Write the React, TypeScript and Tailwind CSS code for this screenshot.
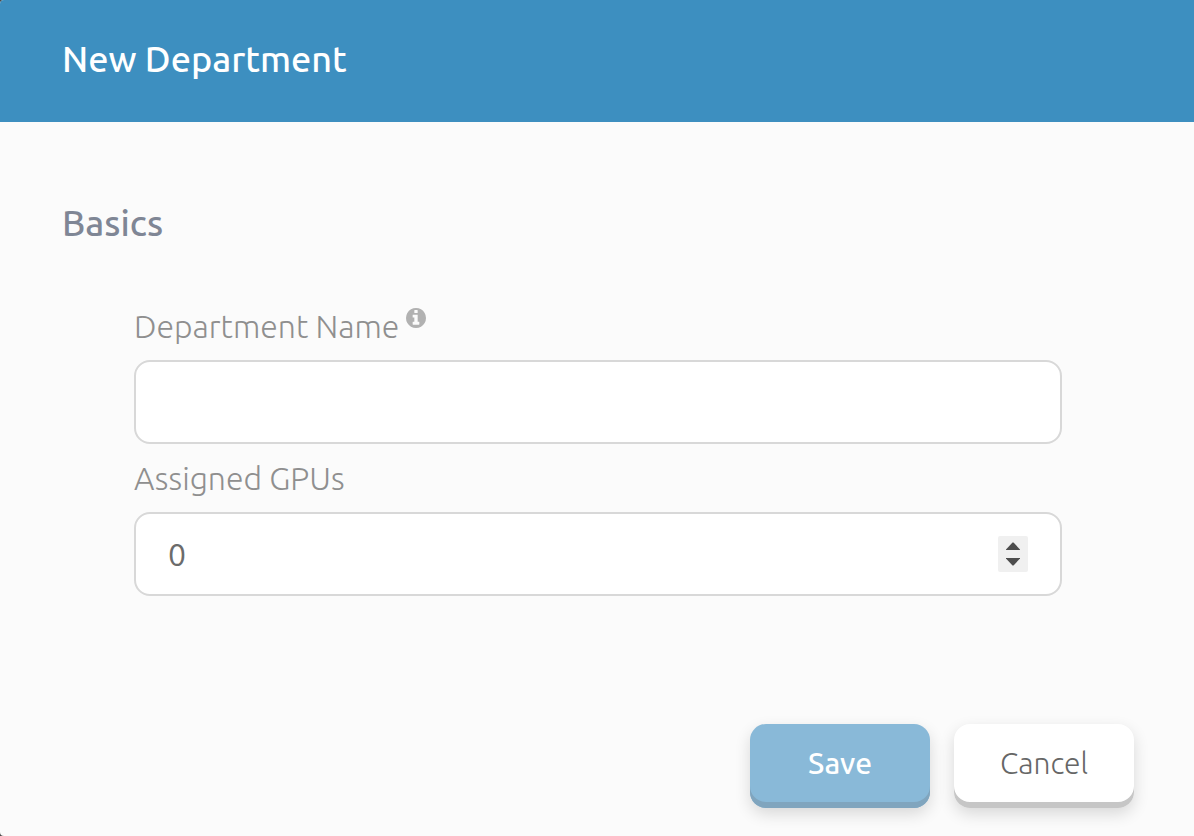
import { useState } from "react";

const fieldClass =
  "block h-21 w-full rounded-2xl border-2 border-[#d8d8d8] bg-white px-8 text-[32px] leading-10 text-[#6b6b6b] outline-none focus:border-[#3d8fc0]";
const labelClass = "text-[32px] leading-10 font-light text-[#8f8f8f]";

function InfoIcon() {
  return (
    <svg className="mt-0.5 size-5" viewBox="128 128 1536 1536" fill="#b1b1b1" aria-hidden="true">
      <path d="M1152 1376v-160q0-14-9-23t-23-9h-96v-512q0-14-9-23t-23-9h-320q-14 0-23 9t-9 23v160q0 14 9 23t23 9h96v320h-96q-14 0-23 9t-9 23v160q0 14 9 23t23 9h448q14 0 23-9t9-23zm-128-896v-160q0-14-9-23t-23-9h-192q-14 0-23 9t-9 23v160q0 14 9 23t23 9h192q14 0 23-9t9-23zm640 416q0 209-103 385.5t-279.5 279.5-385.5 103-385.5-103-279.5-279.5-103-385.5 103-385.5 279.5-279.5 385.5-103 385.5 103 279.5 279.5 103 385.5z" />
    </svg>
  );
}

export default function App() {
  const [name, setName] = useState("");
  const [gpus, setGpus] = useState(0);

  return (
    <div className="bg-[#4a4a4a] font-['Ubuntu','Open_Sans','Noto_Sans',sans-serif]">
      <form
        className="flex min-h-screen flex-col overflow-hidden rounded-l-sm bg-[#fbfbfb]"
        onSubmit={(e) => e.preventDefault()}
      >
        <header className="bg-[#3d8fc0] px-[62px] pt-[35px] pb-[39px]">
          <h1 className="text-[36px] leading-12 font-medium text-white">New Department</h1>
        </header>

        <main className="flex-1 pt-[77px] pr-[132px] pl-[62px]">
          <h2 className="text-[36px] leading-12 font-medium text-[#7f8695]">Basics</h2>

          <div className="mt-[59px] ml-[72px]">
            <div className="flex items-start gap-[7px]">
              <label htmlFor="department-name" className={labelClass}>
                Department Name
              </label>
              <InfoIcon />
            </div>
            <input
              id="department-name"
              type="text"
              className={`mt-3.5 ${fieldClass}`}
              value={name}
              onChange={(e) => setName(e.target.value)}
            />

            <label htmlFor="assigned-gpus" className={`mt-3.5 block ${labelClass}`}>
              Assigned GPUs
            </label>
            <div className="relative mt-3.5">
              <input
                id="assigned-gpus"
                type="number"
                min={0}
                className={`[appearance:textfield] [&::-webkit-inner-spin-button]:appearance-none ${fieldClass}`}
                value={gpus}
                onChange={(e) => setGpus(Number(e.target.value))}
              />
              <div className="absolute top-6 right-[34px] flex h-9 w-[30px] flex-col overflow-hidden rounded-xs bg-[#f0f0f0]">
                <button
                  type="button"
                  aria-label="Increase"
                  className="flex flex-1 items-end justify-center pb-1"
                  onClick={() => setGpus(gpus + 1)}
                >
                  <svg width="14" height="8" viewBox="0 0 14 8" fill="#4d4d4d">
                    <path d="M0 8V7.5L6.5.5H7.5L14 7.5V8Z" />
                  </svg>
                </button>
                <button
                  type="button"
                  aria-label="Decrease"
                  className="flex flex-1 items-start justify-center pt-1"
                  onClick={() => setGpus(Math.max(0, gpus - 1))}
                >
                  <svg width="14" height="8" viewBox="0 0 14 8" fill="#4d4d4d">
                    <path d="M0 0V.5L6.5 7.5H7.5L14 .5V0Z" />
                  </svg>
                </button>
              </div>
            </div>
          </div>
        </main>

        <footer className="flex justify-end gap-6 pr-[60px] pb-7">
          <button
            type="submit"
            className="h-21 w-45 rounded-2xl bg-[#89b9d8] pb-1.5 text-[30px] font-medium text-white shadow-[inset_0_-6px_0_#80a5be,0_6px_16px_rgba(0,0,0,0.14)]"
          >
            Save
          </button>
          <button
            type="button"
            className="h-21 w-45 rounded-2xl bg-white pb-1.5 text-[30px] font-light text-[#666666] shadow-[inset_0_-6px_0_#c6c6c6,0_6px_16px_rgba(0,0,0,0.14)]"
          >
            Cancel
          </button>
        </footer>
      </form>
    </div>
  );
}
